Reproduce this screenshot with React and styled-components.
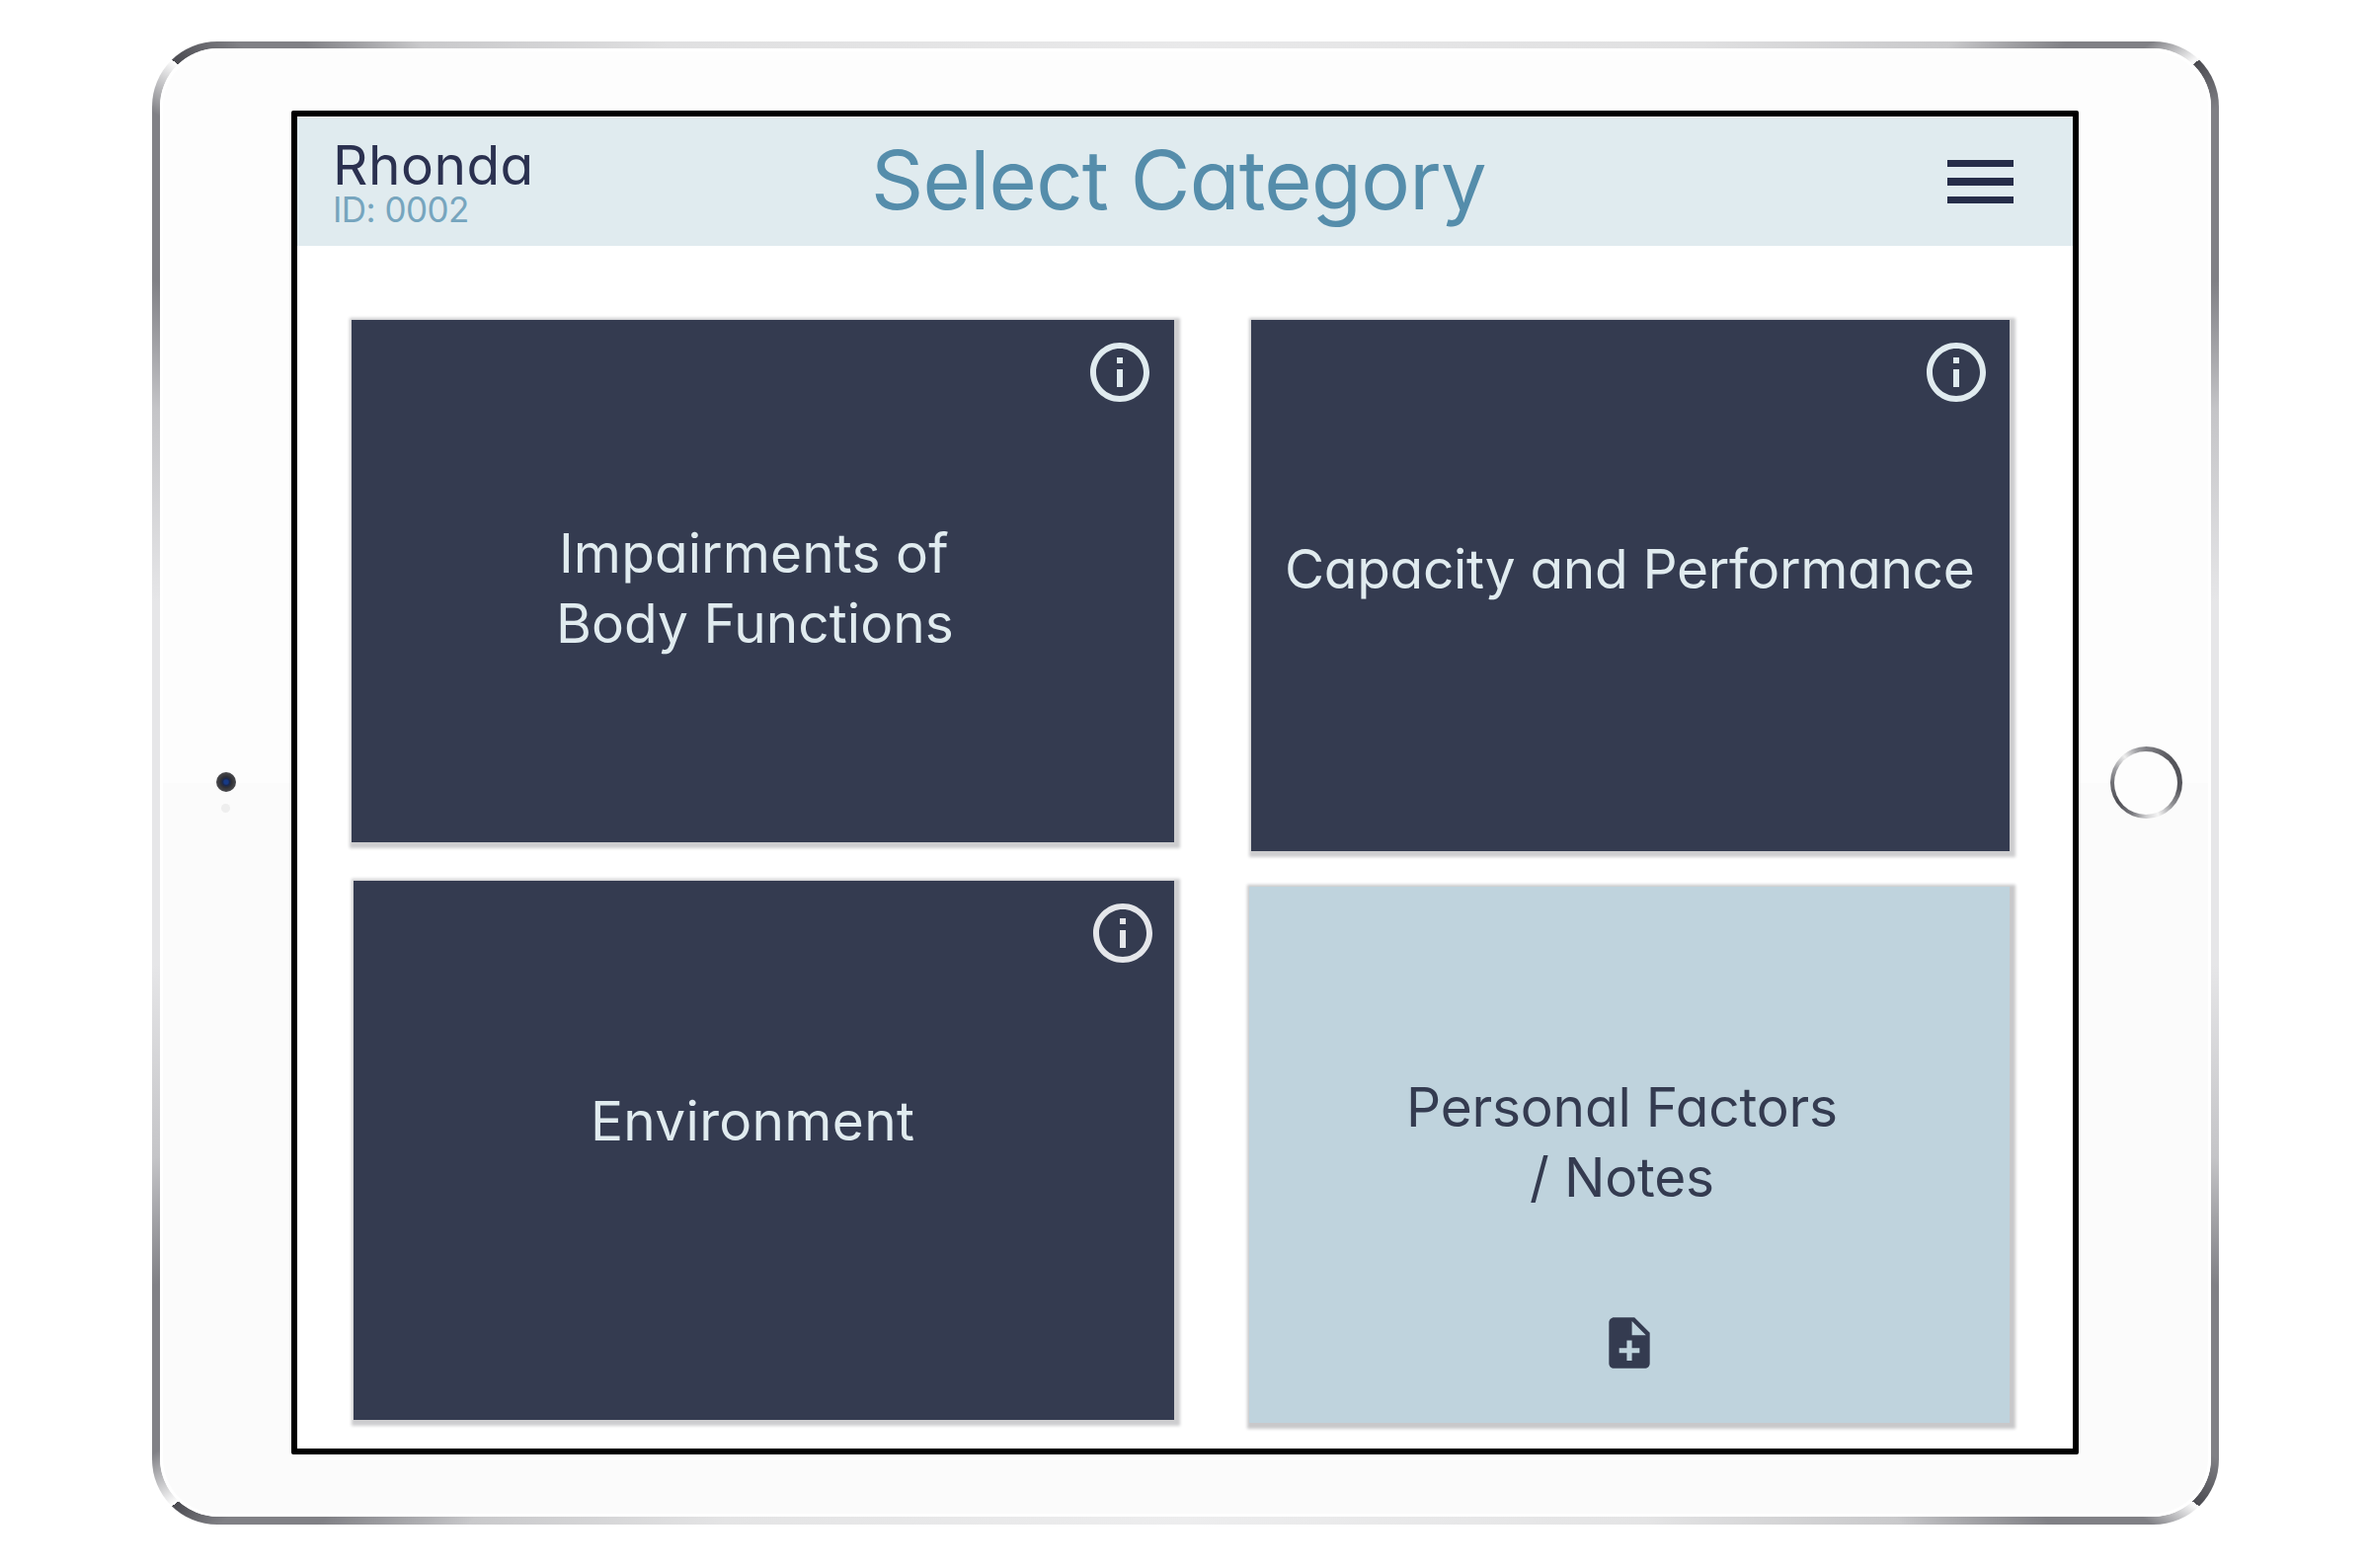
import React from "react";
import styled, { createGlobalStyle } from "styled-components";

const navy = "#343b50";
const ice = "#e0ebef";

const GlobalStyle = createGlobalStyle`
  *, *::before, *::after { box-sizing: border-box; }
  body { margin: 0; background: #fff; }
`;

const Page = styled.main`
  width: 2400px;
  height: 1588px;
  padding: 42px 0 0 154px;
  overflow: hidden;
  background: #fff;
  font-family: Inter, "Open Sans", sans-serif;
  font-feature-settings: "cv11";
`;

const Rim = styled.div`
  width: 2093px;
  height: 1502px;
  padding: 7px 8px 8px;
  border-radius: 66px;
  background: conic-gradient(
    #e9e9ea 0deg, #e0e0e1 35deg, #c9c9cb 46deg, #808085 50deg, #808085 52.5deg, #fff 54.5deg,
    #4a4a50 54.5deg, #808085 56.8deg, #808085 64deg, #c4c4c7 70deg, #e6e6e8 80deg,
    #e6e6e8 100deg, #c4c4c7 110deg, #808085 116deg, #808085 123.2deg, #4a4a50 125.5deg,
    #fff 125.5deg, #808085 127.5deg, #808085 130.5deg, #c9c9cb 136deg, #e4e4e5 148deg, #ededee 180deg,
    #e4e4e5 212deg, #c9c9cb 224deg, #808085 229.5deg, #808085 232.5deg, #4a4a50 234.5deg,
    #fff 234.5deg, #808085 237deg, #808085 244deg, #c4c4c7 250deg, #e6e6e8 260deg,
    #e6e6e8 280deg, #c4c4c7 290deg, #808085 296deg, #808085 303deg, #fff 305.5deg,
    #4a4a50 305.5deg, #808085 308deg, #808085 310deg, #c9c9cb 314deg, #e0e0e1 325deg, #e9e9ea 360deg
  );
`;

const Body = styled.div`
  display: grid;
  grid-template-columns: 133px 1810px 134px;
  height: 100%;
  padding-top: 63px;
  border-radius: 59px;
  background: linear-gradient(#fdfdfd 0 50%, #fbfbfb 50%);
  box-shadow: inset 0 0 0 3px #fff;
`;

const Side = styled.div`
  display: flex;
  flex-direction: column;
  align-items: center;
  padding-top: ${(p) => p.$top}px;
  padding-left: ${(p) => p.$left || 0}px;
`;

const Camera = styled.div`
  width: 20px;
  height: 20px;
  border-radius: 50%;
  background: radial-gradient(circle, #173a86 0 2px, #1a2850 3.5px, #303035 5.5px, #46464a 9px);
`;

const Sensor = styled.div`
  width: 9px;
  height: 9px;
  margin-top: 12px;
  border-radius: 50%;
  background: #eee;
`;

const HomeButton = styled.div`
  width: 73px;
  height: 73px;
  padding: 4.5px;
  border-radius: 50%;
  background: conic-gradient(#808085, #55555b 45deg, #55555b 100deg, #909094 130deg, #f4f4f4 160deg, #cfcfd1 180deg, #77777c 205deg, #4e4e54 235deg, #707075 270deg, #a0a0a4 295deg, #eee 320deg, #a0a0a4 343deg, #808085 360deg);
  &::after {
    content: "";
    display: block;
    height: 100%;
    border-radius: 50%;
    background: #fdfdfd;
  }
`;

const Screen = styled.section`
  height: 1361px;
  border: 6px solid #000;
  border-radius: 2px;
  background: #fff;
`;

const Header = styled.header`
  display: grid;
  grid-template-columns: 580px 1fr 127px;
  height: 131px;
  background: ${ice};
  border-top: 1px solid #f4f8fa;
`;

const Patient = styled.div`
  padding: 22px 0 0 35px;
`;

const Line = styled.div`
  white-space: nowrap;
  letter-spacing: ${(p) => p.$track || 0}px;
  margin-left: ${(p) => p.$shift || 0}px;
`;

const Name = styled(Line)`
  font-size: 55px;
  line-height: 53px;
  color: #2b3150;
`;

const PatientId = styled(Line)`
  font-size: 35px;
  line-height: 36px;
  color: #76a5be;
`;

const Title = styled(Line).attrs({ as: "h1" })`
  margin-block: 8px 0;
  font-size: 83px;
  font-weight: 400;
  line-height: 110px;
  color: #558dab;
`;

const Menu = styled.div`
  display: flex;
  flex-direction: column;
  gap: 11px;
  width: 67px;
  padding-top: 43px;
`;

const MenuBar = styled.span`
  height: 7.3px;
  background: #262d49;
`;

const Board = styled.div`
  display: flex;
  gap: 76px;
  padding: 75px 0 0 55px;
`;

const Column = styled.div`
  display: flex;
  flex-direction: column;
  width: ${(p) => p.$width}px;
`;

const Card = styled.article`
  display: flex;
  flex-direction: column;
  height: ${(p) => p.$height}px;
  margin-top: ${(p) => p.$gap || 0}px;
  margin-left: ${(p) => p.$indent || 0}px;
  background: ${(p) => (p.$light ? "#bfd3dd" : navy)};
  color: ${(p) => (p.$light ? navy : ice)};
  box-shadow: 2px 2px 3px 4px ${(p) => (p.$light ? "#c8c8ca" : "#cdcdcf")};
`;

const CardTop = styled.div`
  display: flex;
  justify-content: flex-end;
  height: 89px;
  padding: 17px ${(p) => p.$right}px 0 0;
`;

const Label = styled.div`
  margin-top: ${(p) => p.$top}px;
  font-size: 55px;
  line-height: 70.5px;
`;

const Foot = styled.div`
  padding: 102px 0 0 354px;
  line-height: 0;
`;

const InfoIcon = ({ color = ice }) => (
  <svg width="72" height="72" viewBox="0 0 24 24" fill={color}>
    <path d="M11 7h2v2h-2zm0 4h2v6h-2zm1-9C6.48 2 2 6.48 2 12s4.48 10 10 10 10-4.48 10-10S17.52 2 12 2zm0 18c-4.41 0-8-3.59-8-8s3.59-8 8-8 8 3.59 8 8-3.59 8-8 8z" />
  </svg>
);

const NoteAddIcon = () => (
  <svg width="62" height="62" viewBox="0 0 24 24" fill={navy}>
    <path d="M14 2H6c-1.1 0-1.99.9-1.99 2L4 20c0 1.1.89 2 1.99 2H18c1.1 0 2-.9 2-2V8l-6-6zm2 14h-3v3h-2v-3H8v-2h3v-3h2v3h3v2zm-3-7V3.5L18.5 9H13z" />
  </svg>
);

export default function App() {
  return (
    <>
      <GlobalStyle />
      <Page>
        <Rim>
          <Body>
            <Side $top={670}>
              <Camera />
              <Sensor />
            </Side>
            <Screen>
              <Header>
                <Patient>
                  <Name $track={0.5} $shift={1}>Rhonda</Name>
                  <PatientId $track={-0.55} $shift={1}>ID: 0002</PatientId>
                </Patient>
                <Title $track={-0.75} $shift={1}>Select Category</Title>
                <Menu>
                  <MenuBar />
                  <MenuBar />
                  <MenuBar />
                </Menu>
              </Header>
              <Board>
                <Column $width={833}>
                  <Card $height={529}>
                    <CardTop $right={19}><InfoIcon /></CardTop>
                    <Label $top={112}>
                      <Line $shift={210} $track={0.1}>Impairments of</Line>
                      <Line $shift={207} $track={0.05}>Body Functions</Line>
                    </Label>
                  </Card>
                  <Card $height={546} $gap={39} $indent={2}>
                    <CardTop $right={16}><InfoIcon color="#e4e6ea" /></CardTop>
                    <Label $top={119}>
                      <Line $shift={240} $track={0.3}>Environment</Line>
                    </Label>
                  </Card>
                </Column>
                <Column $width={770}>
                  <Card $height={538} $indent={2}>
                    <CardTop $right={18}><InfoIcon /></CardTop>
                    <Label $top={128}>
                      <Line $shift={34} $track={-0.33}>Capacity and Performance</Line>
                    </Label>
                  </Card>
                  <Card $height={543} $gap={36} $light>
                    <Label $top={188}>
                      <Line $shift={159} $track={-0.2}>Personal Factors</Line>
                      <Line $shift={284} $track={-0.2}>/ Notes</Line>
                    </Label>
                    <Foot><NoteAddIcon /></Foot>
                  </Card>
                </Column>
              </Board>
            </Screen>
            <Side $top={644} $left={2}>
              <HomeButton />
            </Side>
          </Body>
        </Rim>
      </Page>
    </>
  );
}
